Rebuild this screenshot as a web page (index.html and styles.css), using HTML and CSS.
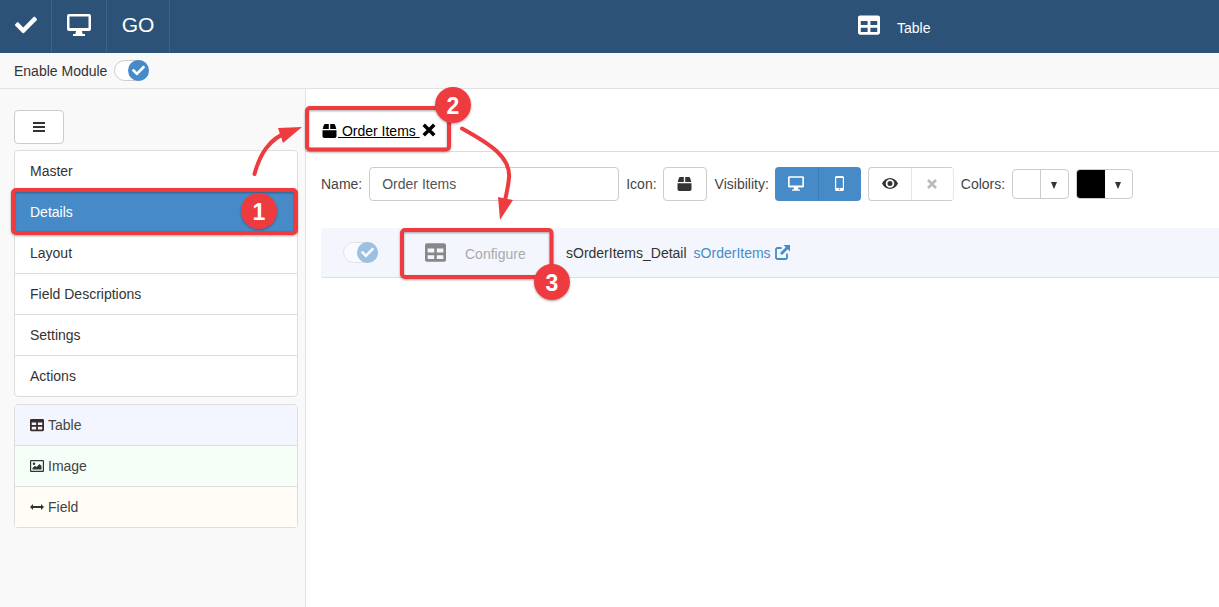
FILE: index.html
```html
<!DOCTYPE html>
<html lang="en">
<head>
<meta charset="utf-8">
<title>Table</title>
<link rel="stylesheet" href="styles.css">
</head>
<body>
<svg class="defs" width="0" height="0">
  <symbol id="i-check" viewBox="0 0 512 512"><path d="M173.898 439.404l-166.4-166.4c-9.997-9.997-9.997-26.206 0-36.204l36.203-36.204c9.997-9.998 26.207-9.998 36.204 0L192 312.69 432.095 72.596c9.997-9.997 26.207-9.997 36.204 0l36.203 36.204c9.997 9.997 9.997 26.206 0 36.204l-294.4 294.401c-9.998 9.997-26.207 9.997-36.204-.001z"/></symbol>
  <symbol id="i-table" viewBox="0 0 512 512"><path d="M464 32H48C21.49 32 0 53.49 0 80v352c0 26.51 21.49 48 48 48h416c26.51 0 48-21.49 48-48V80c0-26.51-21.49-48-48-48zM224 416H64v-96h160v96zm0-160H64v-96h160v96zm224 160H288v-96h160v96zm0-160H288v-96h160v96z"/></symbol>
  <symbol id="i-desktop" viewBox="0 0 24 22"><path fill-rule="evenodd" d="M2 0h20a2 2 0 0 1 2 2v13a2 2 0 0 1-2 2h-7l.6 3h2.400v2H6v-2h2.400l.6-3H2a2 2 0 0 1-2-2V2a2 2 0 0 1 2-2zm.5 2.500v11.500h19V2.500z"/></symbol>
  <symbol id="i-box" viewBox="0 0 14 14"><path d="M3 0H6.300V5H0.200L1.200 1.400A1.900 1.900 0 0 1 3 0zM7.700 0H11A1.900 1.900 0 0 1 12.800 1.400L13.800 5H7.700zM0 6.200H14V12.200A1.800 1.800 0 0 1 12.200 14H1.800A1.800 1.800 0 0 1 0 12.200z"/></symbol>
</svg>

<header class="topbar">
  <div class="top-cell cell-check"><svg class="ic-top-check"><use href="#i-check"/></svg></div>
  <div class="top-cell cell-screen"><svg class="ic-top-screen"><use href="#i-desktop"/></svg></div>
  <div class="top-cell cell-go">GO</div>
  <div class="top-title"><svg class="ic-top-table"><use href="#i-table"/></svg><span>Table</span></div>
</header>

<div class="enablebar">
  <span>Enable Module</span>
  <span class="toggle"><span class="knob"><svg class="ic-knob"><use href="#i-check"/></svg></span></span>
</div>

<div class="content">
  <aside class="sidebar">
    <button class="menu-btn" type="button"><span></span><span></span><span></span></button>
    <ul class="list">
      <li>Master</li>
      <li class="active">Details</li>
      <li>Layout</li>
      <li>Field Descriptions</li>
      <li>Settings</li>
      <li>Actions</li>
    </ul>
    <ul class="list list-types">
      <li class="t-table"><svg class="ic-side"><use href="#i-table"/></svg>Table</li>
      <li class="t-image"><svg class="ic-side" viewBox="0 0 14 12"><path fill-rule="evenodd" d="M1 0h12a1 1 0 0 1 1 1v10a1 1 0 0 1-1 1H1a1 1 0 0 1-1-1V1a1 1 0 0 1 1-1zm.2 1.200v9.600h11.600V1.200zM2.500 9.500V8L5 5.800 6.500 7l3-3 2 2v3.500zM4 5a1.300 1.300 0 1 0 0-2.600A1.300 1.300 0 0 0 4 5z"/></svg>Image</li>
      <li class="t-field"><svg class="ic-side" viewBox="0 0 14 12"><path d="M0 6l3-3v2h8V3l3 3-3 3V7H3v2z"/></svg>Field</li>
    </ul>
  </aside>

  <main class="main">
    <div class="tabs">
      <div class="tab"><a class="tab-link"><svg class="ic-tab"><use href="#i-box"/></svg> Order Items </a><svg class="ic-x" viewBox="0 0 12 12"><path d="M1.500 1.500l9 9m0-9l-9 9"/></svg></div>
    </div>
    <div class="form-row">
      <label>Name:</label>
      <input class="name-input" type="text" value="Order Items">
      <label class="label-icon">Icon:</label>
      <button class="btn btn-icon" type="button"><svg class="ic-box"><use href="#i-box"/></svg></button>
      <label class="label-vis">Visibility:</label>
      <div class="group group-blue">
        <span class="seg"><svg class="ic-desk"><use href="#i-desktop"/></svg></span>
        <span class="seg"><svg class="ic-phone" viewBox="0 0 9 15"><path fill-rule="evenodd" d="M1.500 0h6A1.500 1.500 0 0 1 9 1.500v12A1.500 1.500 0 0 1 7.500 15h-6A1.500 1.500 0 0 1 0 13.500v-12A1.500 1.500 0 0 1 1.500 0zM1.200 2v10h6.600V2zm3.300 10.500a.7.700 0 1 0 0 1.400.7.700 0 0 0 0-1.400z"/></svg></span>
      </div>
      <div class="group group-white">
        <span class="seg"><svg class="ic-eye" viewBox="0 0 16 11"><path fill-rule="evenodd" d="M8 0c3.500 0 6.400 2.200 8 5.500C14.400 8.800 11.500 11 8 11S1.600 8.800 0 5.500C1.600 2.200 4.500 0 8 0zM8 1.200a4.300 4.300 0 1 0 0 8.600 4.300 4.300 0 0 0 0-8.600zM8 3a2.500 2.500 0 1 1 0 5 2.500 2.500 0 0 1 0-5z"/></svg></span>
        <span class="seg seg-off"><svg class="ic-xs" viewBox="0 0 12 12"><path d="M2 2l8 8m0-8l-8 8"/></svg></span>
      </div>
      <label>Colors:</label>
      <div class="picker"><span class="swatch"></span><span class="caret"></span></div>
      <div class="picker picker-black"><span class="swatch"></span><span class="caret"></span></div>
    </div>
    <div class="detail-row">
      <span class="toggle toggle-dim"><span class="knob"><svg class="ic-knob"><use href="#i-check"/></svg></span></span>
      <div class="configure"><svg class="ic-conf"><use href="#i-table"/></svg><span>Configure</span></div>
      <span class="detail-name">sOrderItems_Detail</span>
      <a class="detail-link">sOrderItems<svg class="ic-ext" viewBox="0 0 15 15"><path d="M6.500 3H2.500A1.500 1.500 0 0 0 1 4.500v8A1.500 1.500 0 0 0 2.500 14h8a1.500 1.500 0 0 0 1.500-1.500V8.500" fill="none" stroke="currentColor" stroke-width="1.800"/><path d="M8.500 0H15v6.500L12.700 4.200 7 10 5 8l5.800-5.700z"/></svg></a>
    </div>
  </main>
</div>

<svg class="annotations" width="1219" height="607" viewBox="0 0 1219 607">
  <defs>
    <filter id="sh" x="-20%" y="-20%" width="140%" height="140%"><feDropShadow dx="0" dy="1" stdDeviation="1" flood-color="#000" flood-opacity=".35"/></filter>
  </defs>
  <g fill="none" stroke="#ee3b40" stroke-width="4" filter="url(#sh)">
    <rect x="13" y="190" width="283" height="43" rx="3"/>
    <rect x="307" y="108" width="142" height="41.500" rx="3"/>
    <rect x="402" y="230" width="149.500" height="47" rx="3"/>
  </g>
  <g fill="none" stroke="#ee3b40" stroke-linecap="round" stroke-width="4">
    <path d="M254.500 174C260 154 269 139 288 132"/>
    <path d="M462 128.500C490 144 511 157 509 178C508 188 506 196 504 205"/>
  </g>
  <g fill="#ee3b40">
    <path d="M302 127L278 128L283 143z"/>
    <path d="M500 220L498 197L513 200z"/>
    <g filter="url(#sh)">
      <circle cx="259" cy="211" r="18"/>
      <circle cx="453" cy="105" r="18"/>
      <circle cx="552" cy="282" r="18"/>
    </g>
  </g>
  <g class="badge-nums" fill="#fff" text-anchor="middle">
    <text x="259" y="220">1</text>
    <text x="453" y="114">2</text>
    <text x="552" y="291">3</text>
  </g>
</svg>
</body>
</html>
```
FILE: styles.css
```css
* { box-sizing: border-box; }
html, body { margin: 0; padding: 0; height: 100%; }
body {
  font-family: "Liberation Sans", Arial, sans-serif;
  font-size: 14px;
  color: #333;
  background: #fff;
  overflow: hidden;
  position: relative;
}
svg { fill: currentColor; display: block; }
.defs { position: absolute; }

.topbar {
  height: 53px;
  background: #2d5277;
  color: #fff;
  display: flex;
  align-items: stretch;
  position: relative;
}
.top-cell {
  display: flex;
  align-items: center;
  justify-content: center;
  border-right: 1px solid #3f6386;
  padding-bottom: 3px;
}
.cell-check { width: 52px; }
.cell-screen { width: 55px; }
.cell-go { width: 63px; font-size: 21px; padding-bottom: 4px; }
.ic-top-check { width: 22px; height: 22px; }
.ic-top-screen { width: 24px; height: 22px; }
.top-title {
  margin-left: 688px;
  display: flex;
  align-items: center;
  font-size: 14px;
}
.top-title span { margin-left: 17px; padding-top: 2px; }
.ic-top-table { width: 22px; height: 22px; margin-bottom: 3px; }

.enablebar {
  height: 36px;
  background: #f9f9f9;
  border-bottom: 1px solid #e2e2e2;
  padding: 0 0 0 14px;
  display: flex;
  align-items: center;
  gap: 7px;
}
.toggle {
  width: 35px;
  height: 21px;
  border: 1px solid #ccc;
  border-radius: 11px;
  background: #fff;
  position: relative;
  display: block;
}
.knob {
  position: absolute;
  right: -1px;
  top: -1px;
  width: 21px;
  height: 21px;
  border-radius: 50%;
  background: #468bc8;
  color: #fff;
  display: flex;
  align-items: center;
  justify-content: center;
}
.ic-knob { width: 13px; height: 13px; }
.toggle-dim { opacity: .5; }

.content {
  display: flex;
  height: 518px;
}
.sidebar {
  width: 306px;
  flex: none;
  background: #f9f9f9;
  border-right: 1px solid #e2e2e2;
  padding: 21px 7px 0 14px;
}
.menu-btn {
  width: 50px;
  height: 34px;
  background: #fff;
  border: 1px solid #ccc;
  border-radius: 4px;
  display: flex;
  flex-direction: column;
  align-items: center;
  justify-content: center;
  gap: 2px;
  padding: 0;
  margin-bottom: 6px;
}
.menu-btn span { width: 12px; height: 2px; background: #333; }
.list {
  list-style: none;
  margin: 0 0 7px;
  padding: 0;
  background: #fff;
  border: 1px solid #ddd;
  border-radius: 4px;
}
.list li {
  height: 41px;
  padding: 0 15px;
  display: flex;
  align-items: center;
  border-bottom: 1px solid #ddd;
  color: #333;
}
.list li:last-child { border-bottom: 0; height: 40px; }
.list li.active { background: #468bc8; color: #fff; border-bottom-color: #468bc8; }
.list-types li { color: #444; }
.t-table { background: #f3f6fe; }
.t-image { background: #f5fff8; }
.t-field { background: #fffdf6; }
.ic-side { width: 14px; height: 14px; margin-right: 4px; color: #333; }
.t-table .ic-side { color: #3b2a2a; }

.main { flex: 1; min-width: 0; background: #fff; }
.tabs {
  height: 63px;
  border-bottom: 1px solid #ddd;
  padding-top: 19px;
}
.tab {
  height: 43px;
  padding: 13px 0 0 16px;
  display: flex;
  align-items: flex-start;
  color: #000;
}
.tab-link {
  display: inline-flex;
  align-items: center;
  text-decoration: underline;
  white-space: pre;
  line-height: 20px;
  color: #000;
}
.ic-tab { width: 15px; height: 14px; margin-right: 1px; }
.ic-x { width: 14px; height: 14px; margin: 2px 0 0 2px; fill: none; stroke: #000; stroke-width: 3; }

.form-row {
  display: flex;
  align-items: center;
  padding: 14px 0 0 15px;
  height: 49px;
  margin-bottom: 27px;
}
.form-row label { color: #444; white-space: nowrap; margin-right: 7px; }
.form-row .label-icon { margin-right: 6px; }
.form-row .label-vis { margin-left: 1px; margin-right: 6px; }
.name-input {
  width: 250px;
  height: 34px;
  border: 1px solid #ccc;
  border-radius: 4px;
  padding: 0 12px;
  font: inherit;
  color: #555;
  margin-right: 7px;
}
.btn-icon {
  width: 44px;
  height: 34px;
  background: #fff;
  border: 1px solid #ccc;
  border-radius: 4px;
  display: flex;
  align-items: center;
  justify-content: center;
  margin-right: 7px;
  padding: 0;
  color: #333;
}
.ic-box { width: 15px; height: 14px; }
.group {
  display: flex;
  height: 34px;
  border-radius: 4px;
  margin-right: 7px;
}
.seg {
  width: 43px;
  display: flex;
  align-items: center;
  justify-content: center;
}
.group-blue { background: #468bc8; color: #fff; }
.group-blue .seg + .seg { border-left: 1px solid #3b7db6; }
.group-white { border: 1px solid #ccc; background: #fff; color: #333; width: 86px; }
.group-white .seg { width: 42px; }
.group-white .seg + .seg { border-left: 1px solid #ccc; }
.seg-off { opacity: .5; width: 43px; margin-right: -1px; background: #fff; }
.group-white { border-right-color: #e6e6e6; border-top-color: #ccc; }
.ic-desk { width: 16px; height: 15px; }
.ic-phone { width: 9px; height: 15px; }
.ic-eye { width: 16px; height: 11px; }
.ic-xs { width: 12px; height: 12px; fill: none; stroke: #777; stroke-width: 2.500; }
.picker {
  width: 57px;
  height: 30px;
  border: 1px solid #ccc;
  border-radius: 4px;
  display: flex;
  margin-right: 7px;
  overflow: hidden;
  background: #fff;
}
.swatch { width: 28px; border-right: 1px solid #ccc; }
.caret {
  flex: 1;
  position: relative;
}
.caret::after {
  content: "";
  position: absolute;
  left: 10px;
  top: 12px;
  border-left: 3.500px solid transparent;
  border-right: 3.500px solid transparent;
  border-top: 7px solid #333;
}
.picker-black .swatch { background: #000; border-right: 0; }

.detail-row {
  margin-left: 15px;
  height: 50px;
  background: #f3f6fd;
  border-bottom: 1px solid #ddd;
  border-radius: 3px 0 0 3px;
  display: flex;
  align-items: center;
  padding-left: 22px;
}
.configure {
  width: 150px;
  margin-left: 23px;
  margin-right: 15px;
  padding-left: 24px;
  display: flex;
  align-items: center;
  color: #aaa;
}
.ic-conf { width: 21px; height: 21px; color: #888; margin-right: 19px; }
.configure span { padding-top: 3px; }
.detail-name { color: #333; margin-right: 7px; }
.detail-link { color: #468bc8; display: flex; align-items: center; }
.ic-ext { width: 15px; height: 15px; margin-left: 4px; }

.annotations { position: absolute; left: 0; top: 0; pointer-events: none; }
.badge-nums { font-family: "Liberation Sans", Arial, sans-serif; font-size: 23px; font-weight: 700; }
```
